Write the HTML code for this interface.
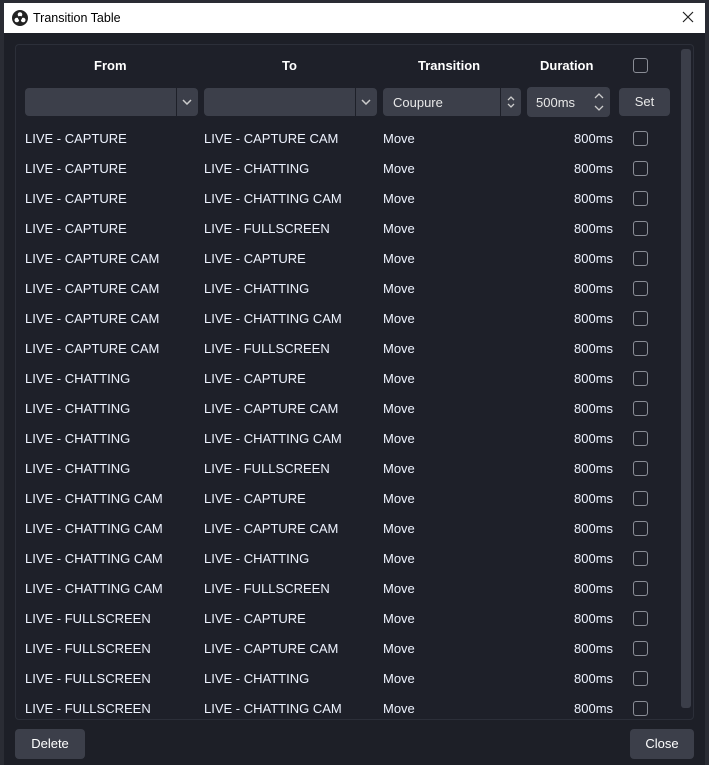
<!DOCTYPE html>
<html><head><meta charset="utf-8"><style>
*{margin:0;padding:0;box-sizing:border-box}
body{width:709px;height:765px;background:#2a2c34;position:relative;overflow:hidden;font-family:"Liberation Sans","DejaVu Sans",sans-serif;font-size:13px;color:#fff}
.win{position:absolute;left:4px;top:3px;width:701px;height:762px;background:#1d1f27}
.title{position:absolute;left:0;top:0;width:701px;height:30px;background:#fff;color:#000;font-size:12.5px}
.title span{position:absolute;left:29px;top:8px}
.logo{position:absolute;left:8px;top:7px}
.x{position:absolute;right:10px;top:7px}
.panel{position:absolute;left:11px;top:41px;width:679px;height:676px;border:1px solid #2c2f39;border-radius:4px;background:#1e2029}
.sb{position:absolute;left:677px;top:46px;width:10px;height:659px;background:#3b3e49;border-radius:3px}
.hd{position:absolute;top:55px;font-weight:bold;font-size:13px}
.ctl{position:absolute;top:85px;height:28px;background:#3c3f4a;border-radius:4px;color:#e8e8e8}
.ctl .sep{position:absolute;top:0;width:1px;height:28px;background:#1e2029}
.row{position:absolute;left:0;height:30px;width:701px}
.row div{position:absolute;top:7px;color:#eef3ff}
.cb{position:absolute;width:15px;height:15px;border:1.5px solid #8a8d96;border-radius:3px}
.btn{position:absolute;top:726px;height:30px;background:#3c3f4a;border-radius:4px;text-align:center;line-height:30px}
</style></head><body>
<div class="win">
<div class="title"><svg class="logo" width="16" height="16" viewBox="0 0 16 16"><circle cx="8" cy="8" r="8" fill="#222"/><circle cx="8" cy="4.5" r="2.3" fill="#fff"/><circle cx="4.8" cy="10" r="2.3" fill="#fff"/><circle cx="11.2" cy="10" r="2.3" fill="#fff"/><circle cx="8" cy="8" r="2" fill="#222"/></svg><span>Transition Table</span><svg class="x" width="14" height="14"><path d="M2 2L12 12M12 2L2 12" stroke="#222" stroke-width="1.2"/></svg></div>
<div class="panel"></div>
<div class="sb"></div>
<div class="hd" style="left:90px">From</div>
<div class="hd" style="left:278px">To</div>
<div class="hd" style="left:414px">Transition</div>
<div class="hd" style="left:536px">Duration</div>
<div class="cb" style="left:629px;top:55px"></div>
<div class="ctl" style="left:21px;width:173px"><div class="sep" style="left:151px"></div><svg style="position:absolute;left:157px;top:11px" width="10" height="6"><path d="M1 1L5 5L9 1" stroke="#ccc" stroke-width="1.5" fill="none"/></svg></div>
<div class="ctl" style="left:200px;width:173px"><div class="sep" style="left:151px"></div><svg style="position:absolute;left:157px;top:11px" width="10" height="6"><path d="M1 1L5 5L9 1" stroke="#ccc" stroke-width="1.5" fill="none"/></svg></div>
<div class="ctl" style="left:379px;width:138px"><span style="position:absolute;left:10px;top:7px">Coupure</span><div class="sep" style="left:117px"></div><svg style="position:absolute;left:123px;top:7px" width="10" height="14"><path d="M2 5L5 2L8 5M2 9L5 12L8 9" stroke="#ccc" stroke-width="1.3" fill="none"/></svg></div>
<div class="ctl" style="left:523px;width:83px;height:30px;top:84px"><span style="position:absolute;left:9px;top:8px">500ms</span><svg style="position:absolute;left:66px;top:4px" width="12" height="22"><path d="M2 7L6 3L10 7M2 15L6 19L10 15" stroke="#ccc" stroke-width="1.3" fill="none"/></svg></div>
<div class="ctl" style="left:615px;width:51px;text-align:center;line-height:28px">Set</div>
<div id="rows"></div>
<div class="btn" style="left:11px;width:70px">Delete</div>
<div class="btn" style="left:626px;width:64px">Close</div>
</div>
<script>
var d=[["LIVE - CAPTURE","LIVE - CAPTURE CAM"],["LIVE - CAPTURE","LIVE - CHATTING"],["LIVE - CAPTURE","LIVE - CHATTING CAM"],["LIVE - CAPTURE","LIVE - FULLSCREEN"],["LIVE - CAPTURE CAM","LIVE - CAPTURE"],["LIVE - CAPTURE CAM","LIVE - CHATTING"],["LIVE - CAPTURE CAM","LIVE - CHATTING CAM"],["LIVE - CAPTURE CAM","LIVE - FULLSCREEN"],["LIVE - CHATTING","LIVE - CAPTURE"],["LIVE - CHATTING","LIVE - CAPTURE CAM"],["LIVE - CHATTING","LIVE - CHATTING CAM"],["LIVE - CHATTING","LIVE - FULLSCREEN"],["LIVE - CHATTING CAM","LIVE - CAPTURE"],["LIVE - CHATTING CAM","LIVE - CAPTURE CAM"],["LIVE - CHATTING CAM","LIVE - CHATTING"],["LIVE - CHATTING CAM","LIVE - FULLSCREEN"],["LIVE - FULLSCREEN","LIVE - CAPTURE"],["LIVE - FULLSCREEN","LIVE - CAPTURE CAM"],["LIVE - FULLSCREEN","LIVE - CHATTING"],["LIVE - FULLSCREEN","LIVE - CHATTING CAM"]];
var h="";d.forEach(function(r,i){var t=121+i*30;h+='<div class="row" style="top:'+t+'px"><div style="left:21px">'+r[0]+'</div><div style="left:200px">'+r[1]+'</div><div style="left:379px">Move</div><div style="left:570px">800ms</div><span class="cb" style="left:629px;top:7px"></span></div>';});
document.getElementById("rows").innerHTML=h;
</script>
</body></html>
